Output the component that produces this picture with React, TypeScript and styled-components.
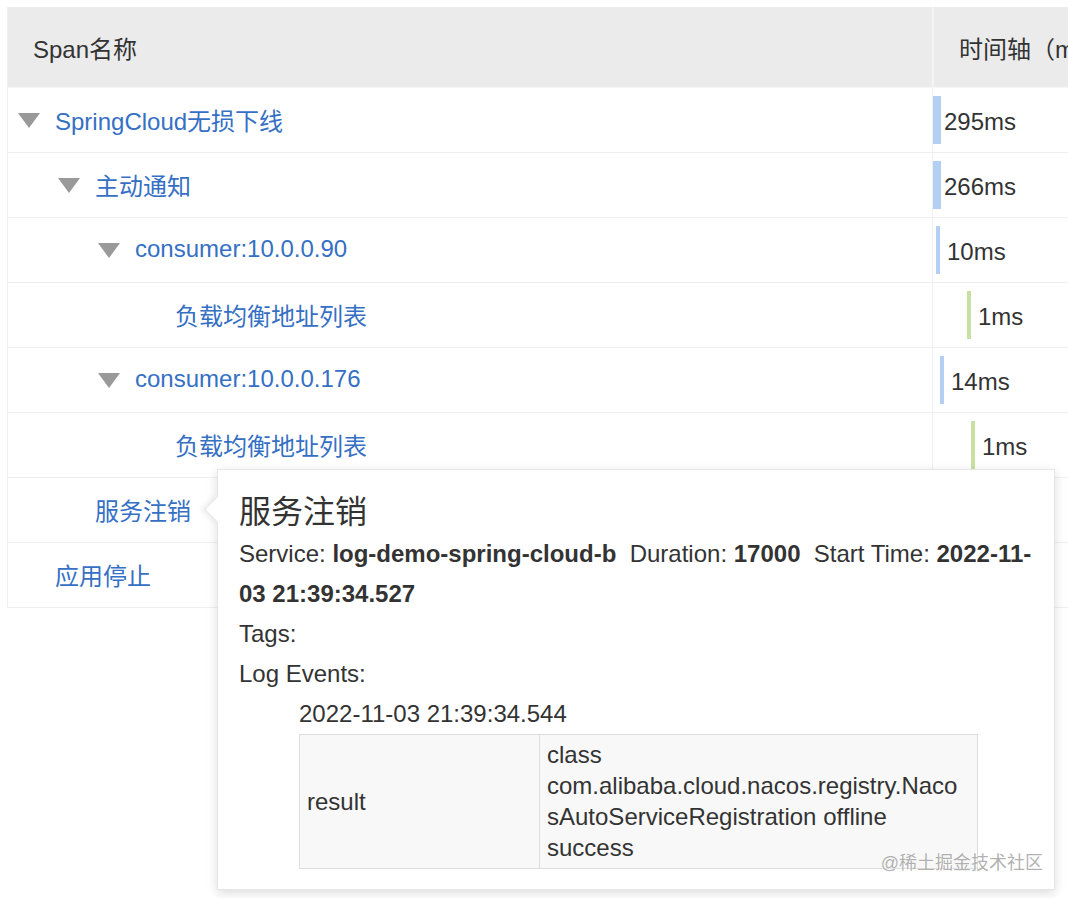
import React from 'react'
import styled, { createGlobalStyle } from 'styled-components'

type SpanRow = {
    name: string
    level: number
    expandable: boolean
    offset?: number
    barWidth?: number
    duration?: string
    leaf?: boolean
    detail?: boolean
}

const spans: SpanRow[] = [
    { name: 'SpringCloud无损下线', level: 0, expandable: true, offset: 0, barWidth: 8, duration: '295ms' },
    { name: '主动通知', level: 1, expandable: true, offset: 0, barWidth: 8, duration: '266ms' },
    { name: 'consumer:10.0.0.90', level: 2, expandable: true, offset: 3, barWidth: 4, duration: '10ms' },
    { name: '负载均衡地址列表', level: 3, expandable: false, offset: 34, barWidth: 4, duration: '1ms', leaf: true },
    { name: 'consumer:10.0.0.176', level: 2, expandable: true, offset: 7, barWidth: 4, duration: '14ms' },
    { name: '负载均衡地址列表', level: 3, expandable: false, offset: 38, barWidth: 4, duration: '1ms', leaf: true },
    { name: '服务注销', level: 1, expandable: false, detail: true },
    { name: '应用停止', level: 0, expandable: false },
]

const GlobalStyle = createGlobalStyle`
    body {
        margin: 0;
        background: #fff;
        overflow: hidden;
        font-family: "Liberation Sans", "Noto Sans CJK SC", sans-serif;
        color: #333;
    }
`

function SpanDetail(): JSX.Element {
    return (
        <StyledDetail>
            <span className={`detail--arrow`} />
            <div className={`detail--title`}>服务注销</div>
            <div className={`detail--line`}>
                Service: <strong>log-demo-spring-cloud-b</strong>&nbsp; Duration: <strong>17000</strong>&nbsp; Start
                Time: <strong>2022-11-03 21:39:34.527</strong>
            </div>
            <div className={`detail--line`}>Tags:</div>
            <div className={`detail--line`}>Log Events:</div>
            <div className={`detail--event`}>
                <div className={`detail--line`}>2022-11-03 21:39:34.544</div>
                <LogTable>
                    <tbody>
                        <tr>
                            <td>result</td>
                            <td>class com.alibaba.cloud.nacos.registry.NacosAutoServiceRegistration offline success</td>
                        </tr>
                    </tbody>
                </LogTable>
            </div>
        </StyledDetail>
    )
}

export default function App(): JSX.Element {
    return (
        <Page>
            <GlobalStyle />
            <TraceTable>
                <HeaderRow>
                    <HeaderCell>Span名称</HeaderCell>
                    <HeaderCell>时间轴（ms）</HeaderCell>
                </HeaderRow>
                {spans.map((span, i) => (
                    <Row key={i}>
                        <NameCell level={span.level}>
                            <Caret visible={span.expandable} />
                            <SpanName>{span.name}</SpanName>
                        </NameCell>
                        <TimeCell style={{ paddingLeft: span.offset ?? 0 }}>
                            {span.duration && (
                                <>
                                    <Bar width={span.barWidth ?? 4} leaf={!!span.leaf} />
                                    <Duration gap={Math.max(2, 11 - (span.barWidth ?? 4))}>{span.duration}</Duration>
                                </>
                            )}
                        </TimeCell>
                        {span.detail && <SpanDetail />}
                    </Row>
                ))}
            </TraceTable>
            <Watermark>@稀土掘金技术社区</Watermark>
        </Page>
    )
}

const Page = styled.div`
    position: relative;
    width: 1068px;
    height: 898px;
    overflow: hidden;
    padding: 7px 0 0 7px;
    box-sizing: border-box;
`

const TraceTable = styled.div`
    display: flex;
    flex-direction: column;
    width: 1400px;
    border-left: 1px solid #eeeeee;
`

const HeaderRow = styled.div`
    display: grid;
    grid-template-columns: 926px 1fr;
    height: 80px;
    background: #ebebeb;
    border-bottom: 1px solid #f6f6f6;
`

const HeaderCell = styled.div`
    display: flex;
    align-items: center;
    padding-left: 25px;
    font-size: 24px;
    color: #333;

    &:first-child {
        border-right: 2px solid #f4f4f4;
    }
`

const Row = styled.div`
    position: relative;
    display: grid;
    grid-template-columns: 925px 1fr;
    height: 64px;
    border-bottom: 1px solid #efefef;
`

const NameCell = styled.div<{ level: number }>`
    display: flex;
    align-items: center;
    padding-left: ${p => 10 + p.level * 40}px;
    border-right: 1px solid #efefef;
`

const Caret = styled.span<{ visible: boolean }>`
    width: 0;
    height: 0;
    margin-right: 15px;
    border-left: 11.5px solid transparent;
    border-right: 11.5px solid transparent;
    border-top: 15px solid ${p => (p.visible ? '#999999' : 'transparent')};
`

const SpanName = styled.span`
    font-size: 24px;
    color: #3570c4;
    white-space: nowrap;
    transform: translateY(-1px);
`

const TimeCell = styled.div`
    display: flex;
    align-items: center;
`

const Bar = styled.span<{ width: number; leaf: boolean }>`
    width: ${p => p.width}px;
    height: 48px;
    background: ${p => (p.leaf ? '#c8e0a2' : '#b3d0f3')};
`

const Duration = styled.span<{ gap: number }>`
    margin-left: ${p => p.gap}px;
    padding-top: 3px;
    font-size: 24px;
    color: #333;
`

const StyledDetail = styled.div`
    position: absolute;
    top: -9px;
    left: 209px;
    z-index: 10;
    width: 838px;
    box-sizing: border-box;
    padding: 20px 12px 20px 21px;
    background: #fff;
    border: 1px solid #e6e6e6;
    box-shadow: 0 3px 10px rgba(0, 0, 0, 0.14);
    color: #333;

    .detail {
        &--arrow {
            position: absolute;
            top: 30px;
            left: -10px;
            width: 18px;
            height: 18px;
            background: #fff;
            border-left: 1px solid #e6e6e6;
            border-bottom: 1px solid #e6e6e6;
            transform: rotate(45deg);
            box-shadow: -3px 3px 5px rgba(0, 0, 0, 0.06);
        }

        &--title {
            font-size: 32px;
            line-height: 44px;
        }

        &--line {
            font-size: 24px;
            line-height: 40px;

            strong {
                font-weight: 700;
            }
        }

        &--event {
            margin-left: 60px;
        }
    }
`

const LogTable = styled.table`
    width: 679px;
    table-layout: fixed;
    border-collapse: collapse;
    background: #f8f8f8;
    font-size: 24px;
    line-height: 31px;
    color: #333;

    td {
        border: 1px solid #dddddd;
        padding: 4px 7px 5px;
        vertical-align: middle;
    }

    td:first-child {
        width: 240px;
        box-sizing: border-box;
    }

    td:last-child {
        padding-right: 13px;
        overflow-wrap: anywhere;
    }
`

const Watermark = styled.div`
    position: absolute;
    right: 25px;
    bottom: 24px;
    z-index: 20;
    font-size: 18px;
    color: rgba(110, 110, 110, 0.55);
    text-shadow: 0 0 2px #fff;
`
